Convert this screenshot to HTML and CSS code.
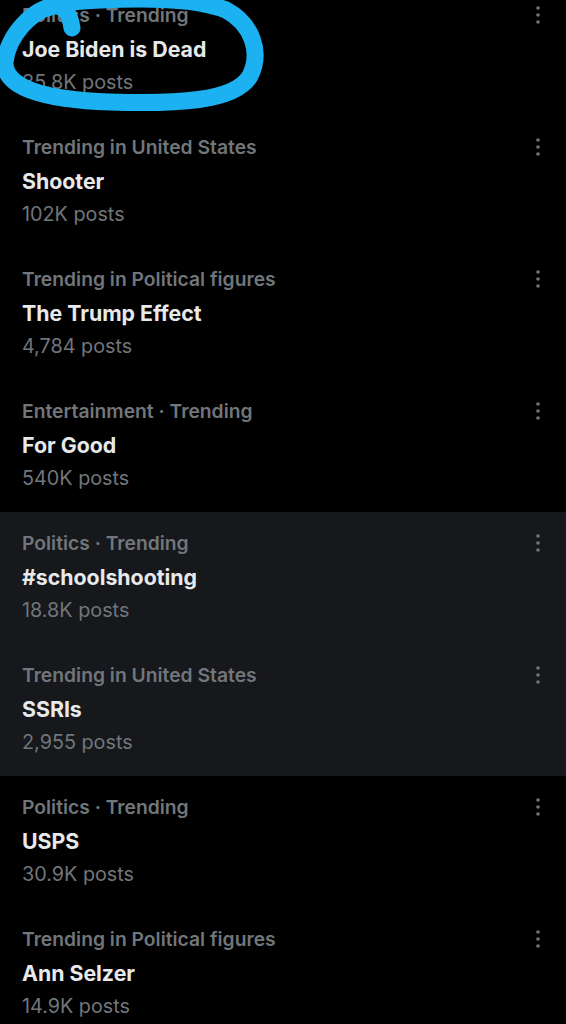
FILE: index.html
```html
<!DOCTYPE html>
<html lang="en">
<head>
  <meta charset="UTF-8" />
  <title>Trending</title>
  <link rel="stylesheet" href="styles.css">
</head>
<body>
  <div class="trend-list">

    <div class="trend">
      <div class="trend-text">
        <div class="trend-cat">Politics · Trending</div>
        <div class="trend-title">Joe Biden is Dead</div>
        <div class="trend-count">35.8K posts</div>
      </div>
      <svg class="more" viewBox="0 0 20 20"><circle cx="10" cy="3" r="1.8"/><circle cx="10" cy="10" r="1.8"/><circle cx="10" cy="17" r="1.8"/></svg>
      <!-- hand drawn circle on top -->
      <svg class="scribble" viewBox="0 0 280 140" width="280" height="140">
        <path d="M72 44 C70 30 64 20 52 22 C30 28 8 52 5 78 C4 104 45 116 110 118 C175 120 235 118 250 92 C262 68 252 40 226 26 C196 14 140 14 100 16 C80 17 60 18 48 24" />
      </svg>
    </div>

    <div class="trend">
      <div class="trend-text">
        <div class="trend-cat">Trending in United States</div>
        <div class="trend-title">Shooter</div>
        <div class="trend-count">102K posts</div>
      </div>
      <svg class="more" viewBox="0 0 20 20"><circle cx="10" cy="3" r="1.8"/><circle cx="10" cy="10" r="1.8"/><circle cx="10" cy="17" r="1.8"/></svg>
    </div>

    <div class="trend">
      <div class="trend-text">
        <div class="trend-cat">Trending in Political figures</div>
        <div class="trend-title">The Trump Effect</div>
        <div class="trend-count">4,784 posts</div>
      </div>
      <svg class="more" viewBox="0 0 20 20"><circle cx="10" cy="3" r="1.8"/><circle cx="10" cy="10" r="1.8"/><circle cx="10" cy="17" r="1.8"/></svg>
    </div>

    <div class="trend">
      <div class="trend-text">
        <div class="trend-cat">Entertainment · Trending</div>
        <div class="trend-title">For Good</div>
        <div class="trend-count">540K posts</div>
      </div>
      <svg class="more" viewBox="0 0 20 20"><circle cx="10" cy="3" r="1.8"/><circle cx="10" cy="10" r="1.8"/><circle cx="10" cy="17" r="1.8"/></svg>
    </div>

    <div class="trend active">
      <div class="trend-text">
        <div class="trend-cat">Politics · Trending</div>
        <div class="trend-title">#schoolshooting</div>
        <div class="trend-count">18.8K posts</div>
      </div>
      <svg class="more" viewBox="0 0 20 20"><circle cx="10" cy="3" r="1.8"/><circle cx="10" cy="10" r="1.8"/><circle cx="10" cy="17" r="1.8"/></svg>
    </div>

    <div class="trend active">
      <div class="trend-text">
        <div class="trend-cat">Trending in United States</div>
        <div class="trend-title">SSRIs</div>
        <div class="trend-count">2,955 posts</div>
      </div>
      <svg class="more" viewBox="0 0 20 20"><circle cx="10" cy="3" r="1.8"/><circle cx="10" cy="10" r="1.8"/><circle cx="10" cy="17" r="1.8"/></svg>
    </div>

    <div class="trend">
      <div class="trend-text">
        <div class="trend-cat">Politics · Trending</div>
        <div class="trend-title">USPS</div>
        <div class="trend-count">30.9K posts</div>
      </div>
      <svg class="more" viewBox="0 0 20 20"><circle cx="10" cy="3" r="1.8"/><circle cx="10" cy="10" r="1.8"/><circle cx="10" cy="17" r="1.8"/></svg>
    </div>

    <div class="trend">
      <div class="trend-text">
        <div class="trend-cat">Trending in Political figures</div>
        <div class="trend-title">Ann Selzer</div>
        <div class="trend-count">14.9K posts</div>
      </div>
      <svg class="more" viewBox="0 0 20 20"><circle cx="10" cy="3" r="1.8"/><circle cx="10" cy="10" r="1.8"/><circle cx="10" cy="17" r="1.8"/></svg>
    </div>

  </div>
</body>
</html>
```

FILE: styles.css
```css
body {
  margin: 0;
  background: #000;
  font-family: Inter, "Noto Sans", sans-serif;
  overflow: hidden;
}

.trend-list {
  margin-top: -16px;
}

.trend {
  position: relative;
  display: flex;
  justify-content: space-between;
  align-items: flex-start;
  height: 132px;
  box-sizing: border-box;
  padding: 15px 18px 0 22px;
}

.trend.active {
  background: #16181c;
}

.trend-cat {
  color: #71767b;
  font-size: 19.3px;
  font-weight: 600;
  line-height: 33px;
}

.trend-title {
  color: #e7e9ea;
  font-size: 21.3px;
  font-weight: 700;
  line-height: 34px;
}

.trend-count {
  color: #71767b;
  font-size: 19.8px;
  line-height: 33px;
}

.more {
  width: 20px;
  height: 20px;
  margin-top: 6px;
  fill: #71767b;
}

.scribble {
  position: absolute;
  left: 0;
  top: 0;
  fill: none;
  stroke: #1cb2f2;
  stroke-width: 17;
  stroke-linecap: round;
  stroke-linejoin: round;
}
```
